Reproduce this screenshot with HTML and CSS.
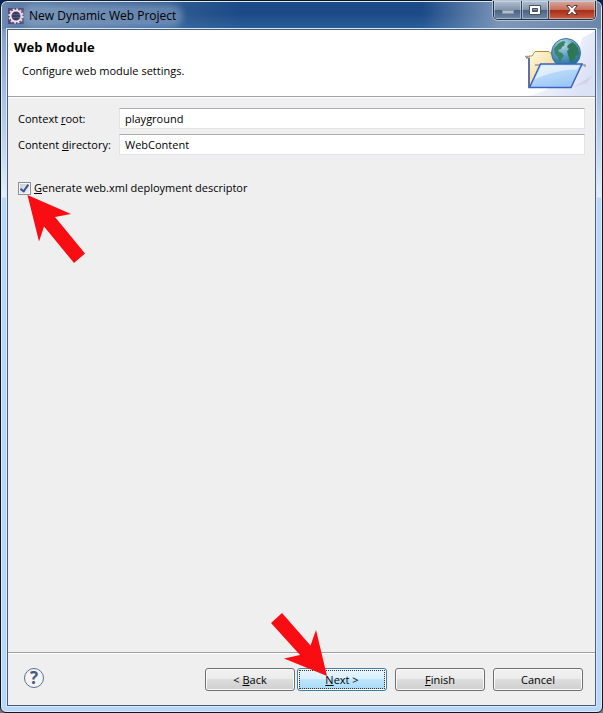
FILE: index.html
```
<!DOCTYPE html>
<html lang="en">
<head>
	<meta charset="utf-8">
	<title>New Dynamic Web Project</title>
	<link rel="stylesheet" href="styles.css">
</head>
<body>
	<div class="window">
		<div class="titlebar">
			<svg class="app-icon" width="16" height="16" viewBox="0 0 16 16">
				<rect width="16" height="16" fill="#5b4680"/>
				<circle cx="8" cy="8" r="6.8" fill="none" stroke="#e4e2e4" stroke-width="1.8" stroke-dasharray="2 1.56"/>
				<circle cx="8" cy="8" r="5.400" fill="#3d3862" stroke="#eceaea" stroke-width="1.8"/>
				<path d="M4 6.500h8M4 9.500h8" stroke="#5a5580"/>
			</svg>
			<span class="title">New Dynamic Web Project</span>
			<div class="window-buttons">
				<button class="min" aria-label="Minimize">
					<svg width="12" height="12" viewBox="0 0 12 12"><rect x="0.5" y="6.5" width="11" height="3" fill="#b4bfca" stroke="#8896a6"/></svg>
				</button>
				<button class="max" aria-label="Maximize">
					<svg width="12" height="12" viewBox="0 0 12 12"><path d="M.5 1.5h11v9H.5zM3.500 4.500h5v3h-5z" fill="#fff" fill-rule="evenodd" stroke="#4a525e"/></svg>
				</button>
				<button class="close" aria-label="Close">
					<svg width="12" height="12" viewBox="0 0 12 12"><path d="M.7 1.5H4L6 3.8 8 1.5h3.3L7.9 6l3.4 4.5H8L6 8.2 4 10.5H.7L4.100 6z" fill="#fff" stroke="#5c3a42"/></svg>
				</button>
			</div>
		</div>

		<div class="content">
			<div class="header">
				<div>
					<h1>Web Module</h1>
					<p>Configure web module settings.</p>
				</div>
				<svg class="banner" width="75" height="66" viewBox="0 0 75 66">
					<defs>
						<linearGradient id="sky" x1="0" y1="0" x2="1" y2="0.6">
							<stop offset="0.1" stop-color="#fff"/>
							<stop offset="1" stop-color="#dbe2f6"/>
						</linearGradient>
						<linearGradient id="back" x1="0" y1="0" x2="1" y2="1">
							<stop offset="0" stop-color="#fffbe2"/>
							<stop offset="1" stop-color="#ecc368"/>
						</linearGradient>
						<linearGradient id="front" x1="0" y1="0" x2="0.5" y2="1">
							<stop offset="0" stop-color="#d4e8fd"/>
							<stop offset="1" stop-color="#9cc8f6"/>
						</linearGradient>
						<radialGradient id="globe" cx="0.4" cy="0.2" r="0.75">
							<stop offset="0" stop-color="#c0dcea"/>
							<stop offset="0.5" stop-color="#64a2c6"/>
							<stop offset="1" stop-color="#2470a4"/>
						</radialGradient>
					</defs>
					<path d="M75 1v65H8C36 60 56 40 62 8z" fill="url(#sky)"/>
					<path d="M55 56l18-11-6 8-13 4z" fill="#c9cce0" opacity="0.6"/>
					<path d="M9 57V26h3l3-4.500h14l3 3h13V57z" fill="url(#back)" stroke="#b98b37"/>
					<path d="M5 26.500h4M6 28h2M15 35h5M62 35h3v2" fill="none" stroke="#9a9aa0" stroke-width="1.500"/>
					<path d="M9 28v30" stroke="#3654a8" stroke-width="1.500"/>
					<circle cx="46" cy="23" r="14.500" fill="url(#globe)" stroke="#3f74a4"/>
					<path d="M34 19l2-3 3-3 4-2 3 1-2 2 1 1-3 2-1 2-3 1 1 2 3 1 2 3-2 2-2 5-1-1-1-5-3-3z" fill="#3a8468"/>
					<path d="M48 15l3-2 1-1 3 2 3 4 1 5-1 3-2-1-1 4-3 4-2-1-1-4-1-3-1-4 2-2-2-2z" fill="#2f7857"/>
					<path d="M20.500 34H62L51 57.500H9.500z" fill="url(#front)" stroke="#3c63bd" stroke-width="1.500"/>
					<path d="M21.500 35.500h38l-2 4c-14 0-28 3-43 10z" fill="#fff" opacity="0.5"/>
				</svg>
			</div>

			<form class="settings" id="settings">
				<label for="root">Context <u>r</u>oot:</label>
				<input type="text" id="root" value="playground">
				<label for="dir">Content <u>d</u>irectory:</label>
				<input type="text" id="dir" value="WebContent">
				<div class="check-row">
					<input type="checkbox" id="descriptor" checked>
					<label for="descriptor"><u>G</u>enerate web.xml deployment descriptor</label>
					<svg class="arrow arrow-check" width="60" height="70" viewBox="0 0 60 70">
						<path d="M0.500 1L44 20 28 23 58 59.500 47 69 17 32.500 12 47.500z" fill="#fa0d12"/>
					</svg>
				</div>
			</form>

			<div class="footer">
				<button class="help" aria-label="Help">?</button>
				<div class="nav">
					<button class="btn">&lt; <u>B</u>ack</button>
					<div class="next">
						<button class="btn btn-default"><u>N</u>ext &gt;</button>
						<svg class="arrow arrow-next" width="58" height="65" viewBox="0 0 58 65">
							<path d="M12 1L1 11 30 43 14 46.500 57 64 46 18 40.500 33.500z" fill="#fa0d12"/>
						</svg>
					</div>
				</div>
				<button class="btn" type="submit" form="settings"><u>F</u>inish</button>
				<button class="btn">Cancel</button>
			</div>
		</div>
	</div>
</body>
</html>
```

FILE: styles.css
```
* {
	box-sizing: border-box;
}
body {
	margin: 0;
	background: linear-gradient(#04245c, #777);
	font: 11px/16px "Open Sans", "Noto Sans", sans-serif;
	color: #000;
}
button, input {
	font: inherit;
	color: inherit;
}
u {
	text-underline-offset: 1px;
}

/* window frame */
.window {
	display: flex;
	flex-direction: column;
	min-height: 100vh;
	padding: 0 6px 6px;
	border: 1px solid #10161f;
	border-radius: 7px 7px 6px 6px;
	box-shadow: inset 0 0 0 1px #dcebfa;
	background: linear-gradient(#6480a8 0, #8ba6c9 40px, #a9c3e3 100px, #c4d8ef 150px, #e4effb 196px, #b8d8fa 197px);
}
.titlebar {
	display: flex;
	align-items: center;
	height: 27px;
	margin: 1px -5px 0;
	padding: 0 0 0 6px;
	border-radius: 5px 5px 0 0;
	background:
		linear-gradient(90deg, #6f8bb0 0, #5f7fa8 10px, transparent 240px, transparent 420px, #7d97ba 500px, #6c86a8 100%),
		linear-gradient(#1b4b88 0, #1c4a86 45%, #22508a 60%, #27609b 100%);
}
.title {
	margin-left: 2px;
	padding: 0 3px;
	border-radius: 8px;
	background: rgba(170, 190, 215, 0.4);
	box-shadow: 0 0 6px 4px rgba(170, 190, 215, 0.4);
	font-size: 12px;
}
.window-buttons {
	display: flex;
	align-self: flex-start;
	margin: -1px 5px 0 auto;
	border: 1px solid #27303e;
	border-top: 0;
	border-radius: 0 0 5px 5px;
	box-shadow: 0 0 0 1px #b3c4da;
	overflow: hidden;
}
.window-buttons button {
	display: flex;
	align-items: center;
	justify-content: center;
	width: 27px;
	height: 18px;
	padding: 0;
	border: 0;
	border-right: 1px solid #3b4656;
	background: linear-gradient(#b3c0d0 0, #8194ac 48%, #4a6282 50%, #7089a7 100%);
	box-shadow: inset 0 0 0 1px rgba(220, 232, 245, 0.5);
}
.window-buttons .min {
	width: 28px;
}
.window-buttons .close {
	width: 46px;
	border-right: 0;
	background: linear-gradient(#dba89c 0, #c4705f 48%, #a82a15 50%, #c75f43 100%);
}

/* dialog */
.content {
	display: flex;
	flex: 1;
	flex-direction: column;
	border: 1px solid #4c5e74;
	outline: 1px solid #d7e8fa;
	background: #efefef;
}
.header {
	display: flex;
	justify-content: space-between;
	border-bottom: 1px solid #a0a0a0;
	background: #fff;
}
.header h1 {
	margin: 8px 6px 0;
	font-size: 13px;
	line-height: 18px;
}
.header p {
	margin: 7px 14px 0;
}
.settings {
	display: grid;
	grid-template-columns: 96px 1fr;
	gap: 5px;
	align-items: center;
	flex: 1;
	align-content: start;
	padding: 10px;
	border-top: 1px solid #fff;
}
.settings input[type="text"] {
	width: 100%;
	height: 21px;
	padding: 0 5px;
	border: 1px solid #e2e3ea;
	border-top-color: #abadb3;
	background: #fff;
}
.check-row {
	position: relative;
	display: flex;
	grid-column: 1 / -1;
	align-items: center;
	gap: 3px;
	margin-top: 20px;
}
.check-row input {
	appearance: none;
	width: 13px;
	height: 13px;
	margin: 0;
	border: 1px solid #8e8f8f;
	background: linear-gradient(135deg, #c4cad4, #f4f5f7);
	box-shadow: inset 0 0 0 1px #f4f4f4;
}
.check-row input:checked::after {
	content: "";
	display: block;
	box-sizing: border-box;
	width: 5px;
	height: 9px;
	margin: 0 0 0 3px;
	border: solid #3f5296;
	border-width: 0 2px 2px 0;
	transform: rotate(35deg);
}
.arrow {
	position: absolute;
	z-index: 1;
	pointer-events: none;
}
.arrow-check {
	left: 9px;
	top: 14px;
}
.footer {
	display: flex;
	align-items: flex-start;
	gap: 8px;
	padding: 15px 12px 14px;
	border-top: 1px solid #a0a0a0;
	box-shadow: inset 0 1px #fff;
}
.help {
	width: 20px;
	height: 20px;
	margin: 0 auto 0 4px;
	padding: 0;
	border: 1px solid #5a7193;
	border-radius: 50%;
	background: #f4f4f4;
	color: #43597f;
	font-size: 17px;
	font-weight: bold;
	line-height: 18px;
}
.nav {
	display: flex;
	gap: 2px;
}
.next {
	position: relative;
}
.arrow-next {
	left: -27px;
	top: -56px;
}
.btn {
	display: block;
	width: 90px;
	height: 23px;
	padding: 0;
	border: 1px solid #707070;
	border-radius: 3px;
	background: linear-gradient(#f2f2f2 0, #ebebeb 48%, #dddddd 50%, #cfcfcf 100%);
	box-shadow: inset 0 0 0 1px #fafafa;
}
.btn-default {
	border-color: #3c7fb1;
	outline: 1px dotted #333;
	outline-offset: -3px;
	background: linear-gradient(#eaf6fd 0, #d9f0fc 48%, #bee6fd 50%, #a7d9f5 100%);
}
```
